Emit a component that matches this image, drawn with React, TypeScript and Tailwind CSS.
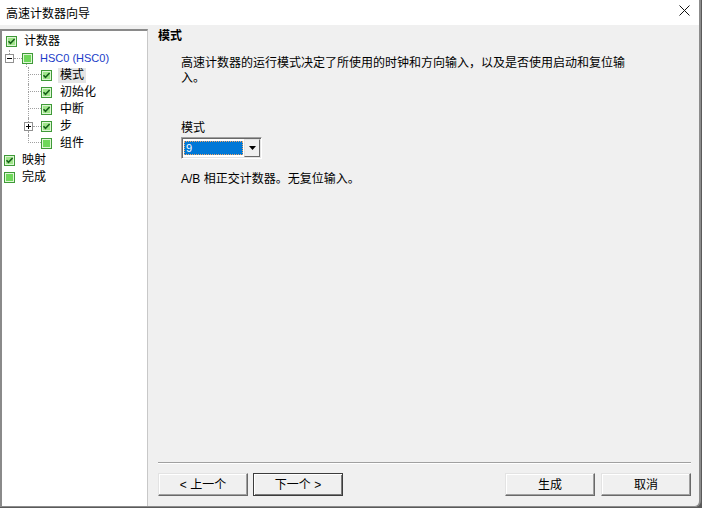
import React from "react";

const dot = "border-dotted border-[#a0a0a0]";

function Check({ checked }: { checked: boolean }) {
  return (
    <svg width="11" height="11" viewBox="0 0 11 11" className="shrink-0 block">
      <rect x="0.5" y="0.5" width="10" height="10" fill="#dff6d6" stroke="#3f9a38" />
      <rect x="2" y="2" width="7" height="7" fill={checked ? "#9fe68a" : "#6fd85a"} />
      {checked && (
        <path d="M2.5 5.2 L4.5 7.3 L8.6 3" fill="none" stroke="#17601a" strokeWidth="1.6" />
      )}
    </svg>
  );
}

function Expander({ plus }: { plus?: boolean }) {
  return (
    <svg width="9" height="9" viewBox="0 0 9 9" className="shrink-0 block">
      <rect x="0.5" y="0.5" width="8" height="8" fill="#fff" stroke="#919191" />
      <path d="M2 4.5h5" stroke="#000" />
      {plus && <path d="M4.5 2v5" stroke="#000" />}
    </svg>
  );
}

function RootRow({ label, checked }: { label: string; checked: boolean }) {
  return (
    <div className="h-[17px] flex items-center pl-[4px] gap-[7px]">
      <Check checked={checked} />
      <span className="leading-[17px]">{label}</span>
    </div>
  );
}

function ChildRow({
  label,
  checked,
  last,
  selected,
}: {
  label: string;
  checked: boolean;
  last?: boolean;
  selected?: boolean;
}) {
  return (
    <div className="h-[17px] flex pl-[28px]">
      <div className="w-[13px] flex flex-col">
        <div className={`h-[8px] border-l border-b ${dot}`} />
        <div className={`flex-1 ${last ? "" : `border-l ${dot}`}`} />
      </div>
      <div className="flex items-center">
        <Check checked={checked} />
      </div>
      <span
        className={`ml-[6px] px-[2px] leading-[15px] my-[1px] ${selected ? "bg-[#e5e5e5]" : ""}`}
      >
        {label}
      </span>
    </div>
  );
}

function Btn({ label, def }: { label: string; def?: boolean }) {
  return (
    <div
      className={`w-[90px] h-[23px] flex items-center justify-center bg-[#f0f0f0] text-[12px] ${
        def
          ? "border border-[#3c3c3c] shadow-[inset_1px_1px_0_#ffffff,inset_-1px_-1px_0_#7a7a7a]"
          : "border border-t-[#e3e3e3] border-l-[#e3e3e3] border-r-[#696969] border-b-[#696969] shadow-[inset_-1px_-1px_0_#a0a0a0,inset_1px_1px_0_#ffffff]"
      }`}
    >
      {label}
    </div>
  );
}

export default function App() {
  return (
    <div className="w-[702px] h-[508px] overflow-hidden bg-[#5a5a5a] font-['Liberation_Sans','Noto_Sans_CJK_SC',sans-serif] text-[12px] text-black">
      <div className="w-[701px] h-[507px] flex flex-col bg-[#f0f0f0] border-r-2 border-b border-[#8c8c8c] rounded-br-[6px] overflow-hidden">
        {/* title bar */}
        <div className="h-[25px] shrink-0 bg-white flex items-center justify-between pl-[6px] pr-[9px]">
          <span className="text-[12px] font-['Noto_Sans_CJK_SC',sans-serif]">高速计数器向导</span>
          <svg width="11" height="11" viewBox="0 0 11 11" className="mb-[5px]">
            <path d="M0.5 0.5 L10.5 10.5 M10.5 0.5 L0.5 10.5" stroke="#111" strokeWidth="1" />
          </svg>
        </div>

        <div className="flex-1 flex min-h-0">
          {/* tree */}
          <div className="w-[148px] shrink-0 mt-[4px] bg-white border-t-2 border-l-2 border-t-[#8a8a8a] border-l-[#8a8a8a] border-r border-r-[#c8c8c8] pt-[2px]">
            <RootRow label="计数器" checked />
            <div className="h-[17px] flex items-stretch pl-[3px]">
              <div className="w-[9px] flex flex-col">
                <div className={`h-[4px] ml-[4px] border-l ${dot}`} />
                <Expander />
                <div className="h-[4px]" />
              </div>
              <div className="w-[8px] flex items-center">
                <div className={`w-full border-t ${dot}`} />
              </div>
              <div className="w-[11px] flex flex-col">
                <div className="h-[3px]" />
                <Check checked={false} />
                <div className={`h-[3px] ml-[4px] border-l ${dot}`} />
              </div>
              <span className="ml-[7px] text-[#1a3cc8] text-[11px] leading-[17px]">HSC0 (HSC0)</span>
            </div>
            <div className="-ml-[2px]">
              <ChildRow label="模式" checked selected />
              <ChildRow label="初始化" checked />
              <ChildRow label="中断" checked />
              <div className="h-[17px] flex pl-[24px]">
                <div className="w-[9px] flex flex-col">
                  <div className={`h-[4px] ml-[4px] border-l ${dot}`} />
                  <Expander plus />
                  <div className={`h-[4px] ml-[4px] border-l ${dot}`} />
                </div>
                <div className="w-[8px] flex items-center">
                  <div className={`w-full border-t ${dot}`} />
                </div>
                <div className="flex items-center">
                  <Check checked />
                </div>
                <span className="ml-[8px] leading-[17px]">步</span>
              </div>
              <ChildRow label="组件" checked={false} last />
            </div>
            <div className="-ml-[2px]">
              <RootRow label="映射" checked />
              <RootRow label="完成" checked={false} />
            </div>
          </div>

          {/* right column */}
          <div className="flex-1 flex flex-col pl-[10px] pr-[8px] pt-[3px] pb-[10px]">
            <div className="font-bold leading-[16px]">模式</div>
            <div className="ml-[23px] mt-[12px] w-[452px] leading-[15px]">
              高速计数器的运行模式决定了所使用的时钟和方向输入，以及是否使用启动和复位输入。
            </div>
            <div className="ml-[23px] mt-[34px] leading-[16px]">模式</div>
            <div className="ml-[23px] mt-[1px] w-[81px] h-[22px] bg-white border border-t-[#a0a0a0] border-l-[#a0a0a0] border-r-white border-b-white shadow-[inset_1px_1px_0_#696969,inset_-1px_-1px_0_#e3e3e3] flex pl-[2px] pr-[1px] py-[1px]">
              <div className="flex-1 py-[2px] pr-[1px]">
                <div className="h-full bg-[#0078d7] border border-dotted border-[#f0a868] text-white text-[11px] leading-[13px] pl-[1px]">
                  9
                </div>
              </div>
              <div className="w-[16px] bg-[#f0f0f0] border border-t-[#e3e3e3] border-l-[#e3e3e3] border-r-[#696969] border-b-[#696969] flex items-center justify-center">
                <svg width="7" height="4" viewBox="0 0 7 4">
                  <path d="M0 0 H7 L3.5 4 Z" fill="#000" />
                </svg>
              </div>
            </div>
            <div className="ml-[23px] mt-[12px] leading-[16px]">A/B 相正交计数器。无复位输入。</div>

            <div className="flex-1" />
            <div className="h-[2px] border-t border-t-[#a0a0a0] border-b border-b-white" />
            <div className="mt-[9px] flex justify-between">
              <div className="flex gap-[5px]">
                <Btn label="< 上一个" />
                <Btn label="下一个 >" def />
              </div>
              <div className="flex gap-[6px]">
                <Btn label="生成" />
                <Btn label="取消" />
              </div>
            </div>
          </div>
        </div>
      </div>
    </div>
  );
}
